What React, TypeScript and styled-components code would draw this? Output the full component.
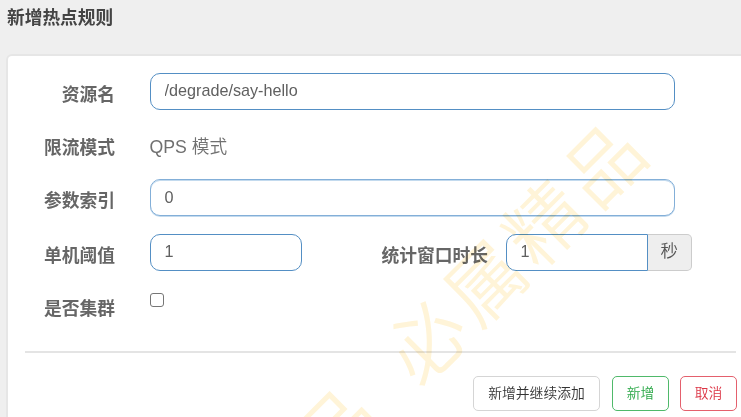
import React from "react";
import styled, { createGlobalStyle } from "styled-components";

const GlobalStyle = createGlobalStyle`
  * { box-sizing: border-box; }
  html, body { margin: 0; height: 417px; overflow: hidden; background: #efefef; }
  body, input, button {
    font-family: "Liberation Sans", "Noto Sans CJK SC", sans-serif;
    color: #676a6c;
  }
`;

const Page = styled.main`
  position: relative;
  width: 741px;
  height: 417px;
  overflow: hidden;
  display: flex;
  flex-direction: column;
`;

const Title = styled.h1`
  margin: 0;
  height: 54px;
  padding: 5px 0 0 7px;
  font-size: 17.7px;
  line-height: 26px;
  font-weight: 700;
  color: #444;
`;

const Card = styled.section`
  width: 760px;
  flex: 1;
  margin-left: 6px;
  padding: 17px 0 0 17px;
  background: #fff;
  border: 2px solid #e6e6e6;
  border-bottom: 0;
  border-radius: 6px 0 0 0;
`;

const Form = styled.form`
  height: 278px;
  display: grid;
  grid-template-rows: 53px 53px 55px 53px 1fr;
`;

const Row = styled.div`
  display: flex;
  align-items: flex-start;
`;

const Label = styled.label<{ $width: number; $gap: number }>`
  width: ${(p) => p.$width}px;
  margin-right: ${(p) => p.$gap}px;
  padding-top: 9px;
  font-size: 17.75px;
  line-height: 26px;
  font-weight: 700;
  text-align: right;
  white-space: nowrap;
  color: #666;
`;

const Input = styled.input<{ $width: number; $joined?: boolean; $soft?: boolean }>`
  width: ${(p) => p.$width}px;
  height: 37px;
  margin: 0;
  padding: 0 14px ${(p) => (p.$soft ? 0 : 2)}px;
  border: 1px solid ${(p) => (p.$soft ? "#83afd8" : "#548fc4")};
  border-radius: ${(p) => (p.$joined ? "10px 0 0 10px" : "10px")};
  box-shadow: ${(p) => (p.$soft ? "inset 0 1px #c3daee, 0 1px #c3daee" : "none")};
  background: #fff;
  font-size: 16.2px;
  color: #606060;
  outline: none;
`;

const StaticText = styled.span`
  padding-top: 8px;
  font-size: 17.7px;
  line-height: 26px;
  font-weight: 350;
  color: #707070;
`;

const Unit = styled.span`
  width: 44.5px;
  height: 37px;
  border: 1px solid #ccc;
  border-left: 0;
  border-radius: 0 5px 5px 0;
  background: #eee;
  font-size: 17.5px;
  font-weight: 350;
  line-height: 33px;
  text-align: center;
  color: #555;
`;

const Checkbox = styled.input`
  appearance: none;
  width: 14px;
  height: 14px;
  margin: 6px 0 0;
  border: 1px solid #767676;
  border-radius: 3px;
  background: #fff;
`;

const Divider = styled.hr`
  width: 711px;
  height: 2px;
  margin: 0;
  border: 0;
  background: #e4e4e4;
`;

const Actions = styled.footer`
  width: 712px;
  display: flex;
  justify-content: flex-end;
  padding-top: 23px;
`;

const Button = styled.button<{ $width: number; $gap?: number; $color: string; $border: string }>`
  width: ${(p) => p.$width}px;
  height: 35px;
  margin: 0 0 0 ${(p) => p.$gap ?? 0}px;
  padding: 0;
  border: 1px solid ${(p) => p.$border};
  border-radius: 5px;
  background: #fff;
  font-size: 13.8px;
  font-weight: 350;
  line-height: 32px;
  white-space: nowrap;
  color: ${(p) => p.$color};
`;

const Watermark = styled.div<{ $x: number; $y: number; $count: number }>`
  position: absolute;
  left: ${(p) => p.$x}px;
  top: ${(p) => p.$y}px;
  width: ${(p) => p.$count * 83.5}px;
  height: 84px;
  margin: -42px 0 0 ${(p) => p.$count * -41.75}px;
  transform: rotate(-45deg);
  display: grid;
  grid-template-columns: repeat(${(p) => p.$count}, 83.5px);
  justify-items: center;
  font-family: "Noto Sans CJK SC", sans-serif;
  font-size: 77px;
  font-weight: 350;
  line-height: 84px;
  color: #fff4d8;
  mix-blend-mode: multiply;
  pointer-events: none;
`;

const marks = [
  { text: "必属精品", x: 512, y: 249.5 },
  { text: "品", x: 335, y: 426 },
];

export default function App() {
  return (
    <>
      <GlobalStyle />
      <Page>
        <Title>新增热点规则</Title>
        <Card>
          <Form>
            <Row>
              <Label $width={90} $gap={34.5}>资源名</Label>
              <Input $width={525.5} defaultValue="/degrade/say-hello" />
            </Row>
            <Row>
              <Label $width={90} $gap={34.5}>限流模式</Label>
              <StaticText>QPS 模式</StaticText>
            </Row>
            <Row>
              <Label $width={90} $gap={34.5}>参数索引</Label>
              <Input $width={525.5} $soft defaultValue="0" />
            </Row>
            <Row>
              <Label $width={90} $gap={34.5}>单机阈值</Label>
              <Input $width={152.5} defaultValue="1" />
              <Label $width={186} $gap={17.5}>统计窗口时长</Label>
              <Input $width={142} $joined defaultValue="1" />
              <Unit>秒</Unit>
            </Row>
            <Row>
              <Label $width={90} $gap={34.5}>是否集群</Label>
              <Checkbox type="checkbox" />
            </Row>
          </Form>
          <Divider />
          <Actions>
            <Button type="button" $width={127} $color="#333" $border="#d5d5d5">新增并继续添加</Button>
            <Button type="button" $width={57} $gap={12} $color="#28a745" $border="#4fb96a">新增</Button>
            <Button type="button" $width={57} $gap={11} $color="#dc3545" $border="#e4606d">取消</Button>
          </Actions>
        </Card>
        {marks.map((m) => (
          <Watermark key={m.x} $x={m.x} $y={m.y} $count={m.text.length} aria-hidden="true">
            {[...m.text].map((ch) => (
              <span key={ch}>{ch}</span>
            ))}
          </Watermark>
        ))}
      </Page>
    </>
  );
}
